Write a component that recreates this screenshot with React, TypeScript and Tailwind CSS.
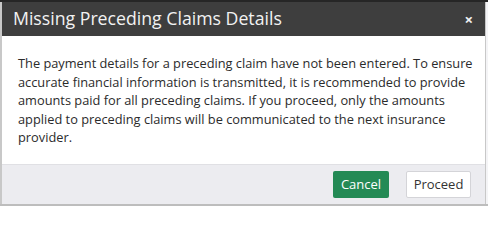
import React from "react";

export default function App() {
  return (
    <div className="w-[488px] h-[206px] bg-[#f4f4f6] overflow-hidden" style={{ fontFamily: '"Open Sans", sans-serif' }}>
      <div className="h-[2px] bg-[#262626]" />
      <div className="w-[486px] h-[202px] flex flex-col border-l-2 border-r border-[#c8c8c8] bg-white">
        <div className="h-[34px] bg-[#3e3e3e] flex items-center justify-between pl-[11px] pr-[12px] shrink-0">
          <span className="text-[17.7px] text-[#f2f2f2] leading-none">Missing Preceding Claims Details</span>
          <span className="text-[#f2f2f2] text-[15px] font-bold leading-none">×</span>
        </div>
        <div className="flex-1 bg-white pl-[16px] pr-[8px] pt-[18px]">
          <p className="text-[12.8px] leading-[18.5px] text-[#2b2b2b]">
            The payment details for a preceding claim have not been entered. To ensure accurate financial information is transmitted, it is recommended to provide amounts paid for all preceding claims. If you proceed, only the amounts applied to preceding claims will be communicated to the next insurance provider.
          </p>
        </div>
        <div className="h-[40px] bg-[#ececf0] border-t border-[#e0e0e4] flex items-center justify-end gap-[17px] pr-[14px] shrink-0">
          <button className="w-[56px] h-[27px] rounded-[2px] bg-[#248a55] text-white text-[13px] flex items-center justify-center">Cancel</button>
          <button className="w-[65px] h-[27px] rounded-[2px] bg-white border border-[#d4d4d8] text-[#333] text-[13px] flex items-center justify-center">Proceed</button>
        </div>
      </div>
      <div className="h-[2px] bg-[#bdbdbd]" />
    </div>
  );
}
